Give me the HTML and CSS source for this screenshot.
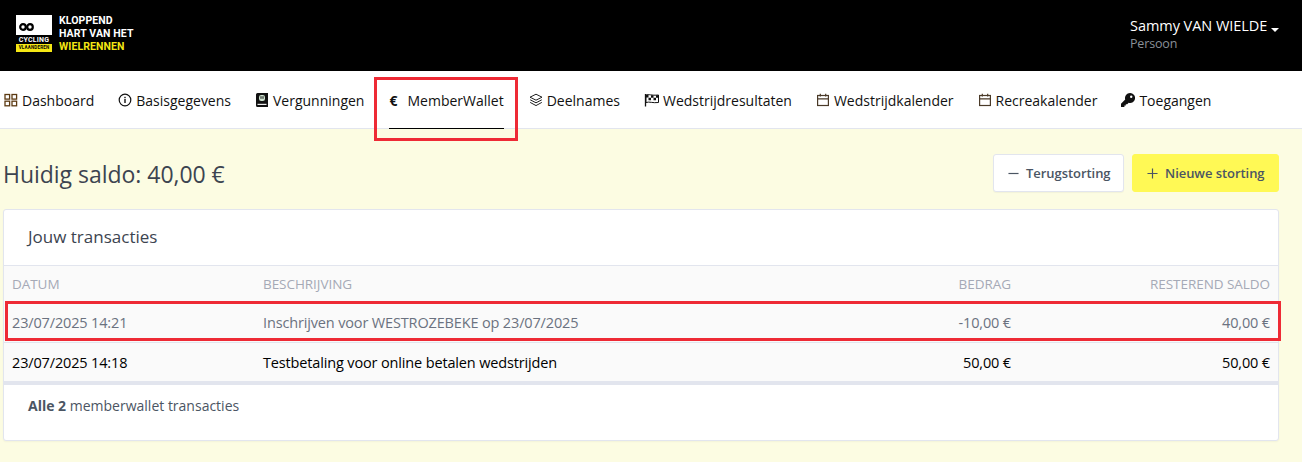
FILE: index.html
```html
<!DOCTYPE html>
<html lang="nl">
<head>
<meta charset="utf-8">
<title>MemberWallet</title>
<link rel="stylesheet" href="styles.css">
</head>
<body>
<header class="topbar">
  <div class="brand">
    <div class="logo">
      <div class="logo-top">
        <svg width="15" height="8" viewBox="0 0 15 8"><circle cx="4" cy="4" r="2.800" fill="none" stroke="#000" stroke-width="2.200"/><circle cx="11" cy="4" r="2.800" fill="none" stroke="#000" stroke-width="2.200"/></svg>
      </div>
      <div class="logo-mid">CYCLING</div>
      <div class="logo-bot">VLAANDEREN</div>
    </div>
    <div class="slogan"><span>KLOPPEND</span><span>HART VAN HET</span><span class="yellow">WIELRENNEN</span></div>
  </div>
  <div class="user">
    <div class="user-name">Sammy VAN WIELDE<span class="caret"></span></div>
    <div class="user-role">Persoon</div>
  </div>
</header>
<nav class="nav">
  <a class="nav-item"><svg class="ic" viewBox="0 0 14 14"><g fill="none" stroke="#5c3a12" stroke-width="1.300"><rect x="1" y="1.500" width="4.600" height="4.600"/><rect x="8" y="1.500" width="4.600" height="4.600"/><rect x="1" y="8.200" width="4.600" height="4.600"/><rect x="8" y="8.200" width="4.600" height="4.600"/></g></svg>Dashboard</a>
  <a class="nav-item"><svg class="ic" viewBox="0 0 14 14"><circle cx="7" cy="7" r="5.800" fill="none" stroke="#111" stroke-width="1.200"/><rect x="6.300" y="6" width="1.400" height="4" fill="#111"/><rect x="6.300" y="3.800" width="1.400" height="1.400" fill="#111"/></svg>Basisgegevens</a>
  <a class="nav-item"><svg class="ic" viewBox="0 0 14 14"><path d="M1 1.500A1.500 1.500 0 0 1 2.500 0H13v14H2.500A1.500 1.500 0 0 1 1 12.500z" fill="#111"/><rect x="4" y="2" width="6" height="6" rx="2.200" fill="#cfe3d0"/><rect x="5.500" y="3.200" width="1" height="2.600" fill="#111"/><rect x="7.500" y="3.200" width="1" height="2.600" fill="#111"/><rect x="2.500" y="10.800" width="9" height="1.200" fill="#eee"/></svg>Vergunningen</a>
  <a class="nav-item active"><span class="euro">€</span>MemberWallet</a>
  <a class="nav-item"><svg class="ic" viewBox="0 0 14 14"><g fill="none" stroke="#222" stroke-width="1" stroke-linejoin="round"><path d="M7 1.200 13 4.200 7 7.200 1 4.200z"/><path d="M1.200 6.800 7 9.800l5.800-3"/><path d="M1.200 9.400 7 12.600l5.800-3.200"/></g></svg>Deelnames</a>
  <a class="nav-item"><svg class="ic ic-flag" viewBox="0 0 15 14"><path d="M1.500 1v12.500" stroke="#111" stroke-width="1.300"/><path d="M2 2c3-1.200 5 .8 12.500 0v7.500c-6 .8-9-1.200-12.500 0z" fill="#fff" stroke="#111" stroke-width="1"/><path d="M2 2h2.500v2.500H2zM7 2.300h2.500v2.500H7zM12 2.300h2.500v2.500H12zM4.500 4.700H7v2.500H4.500zM9.500 4.800H12v2.500H9.500z" fill="#111"/></svg>Wedstrijdresultaten</a>
  <a class="nav-item"><svg class="ic" viewBox="0 0 14 14"><g fill="none" stroke="#4a3a28" stroke-width="1.200"><rect x="1.600" y="2.500" width="10.800" height="10"/><path d="M1.600 5.800h10.800M4.300.8v2.600M9.700.8v2.600"/></g></svg>Wedstrijdkalender</a>
  <a class="nav-item"><svg class="ic" viewBox="0 0 14 14"><g fill="none" stroke="#4a3a28" stroke-width="1.200"><rect x="1.600" y="2.500" width="10.800" height="10"/><path d="M1.600 5.800h10.800M4.300.8v2.600M9.700.8v2.600"/></g></svg>Recreakalender</a>
  <a class="nav-item"><svg class="ic" viewBox="0 0 14 14"><path d="M9 0a5 5 0 1 1-1.300 9.800L6.200 11.200H4.800V12.600H3.400V14H0V10.800L4.200 6.400A5 5 0 0 1 9 0z" fill="#111"/><circle cx="10.200" cy="3.800" r="1.200" fill="#fff"/></svg>Toegangen</a>
</nav>
<main class="content">
  <div class="title-row">
    <h1 class="saldo">Huidig saldo: 40,00 €</h1>
    <div class="actions">
      <button class="btn btn-white"><svg class="btn-ic" viewBox="0 0 12 12"><path d="M.5 6h11" stroke="#4b5563" stroke-width="1.300"/></svg>Terugstorting</button>
      <button class="btn btn-yellow"><svg class="btn-ic" viewBox="0 0 12 12"><path d="M.5 6h11M6 .5v11" stroke="#4b5563" stroke-width="1.300"/></svg>Nieuwe storting</button>
    </div>
  </div>
  <section class="card">
    <h2 class="card-title">Jouw transacties</h2>
    <div class="table">
      <div class="row head">
        <div>DATUM</div><div>BESCHRIJVING</div><div class="num">BEDRAG</div><div class="num">RESTEREND SALDO</div>
      </div>
      <div class="row muted marked">
        <div>23/07/2025 14:21</div><div>Inschrijven voor WESTROZEBEKE op 23/07/2025</div><div class="num">-10,00 €</div><div class="num">40,00 €</div>
      </div>
      <div class="row dark">
        <div>23/07/2025 14:18</div><div>Testbetaling voor online betalen wedstrijden</div><div class="num">50,00 €</div><div class="num">50,00 €</div>
      </div>
    </div>
    <div class="card-foot"><strong>Alle 2</strong> memberwallet transacties</div>
  </section>
</main>
</body>
</html>
```
FILE: styles.css
```css
* { box-sizing: border-box; }
html, body { margin: 0; height: 100%; }
body {
  background: #fcfce2;
  font-family: "Open Sans", "Noto Sans", sans-serif;
  color: #111;
  overflow: hidden;
}
.topbar {
  height: 71px;
  background: #000;
  display: flex;
  justify-content: space-between;
  padding: 15px 22px 0 16px;
}
.brand { display: flex; gap: 7px; align-items: flex-start; }
.logo { width: 36px; height: 37px; display: flex; flex-direction: column; }
.logo-top { height: 20px; background: #fff; display: flex; align-items: flex-end; padding: 0 0 4px 3px; }
.logo-mid {
  height: 9px; background: #000; color: #fff;
  font: 700 7px/10px "Roboto", sans-serif; text-align: center; letter-spacing: .2px;
}
.logo-bot {
  height: 8px; background: #f5e714; color: #000;
  font: 700 4.500px/8px "Roboto", sans-serif; text-align: center; letter-spacing: .2px;
}
.slogan {
  display: flex; flex-direction: column;
  color: #fff;
  font: 700 10.500px/13px "Roboto", sans-serif;
  letter-spacing: .1px;
  margin-top: -1px;
}
.yellow { color: #f5e714; }
.user { width: 150px; margin-top: 1px; }
.user-name { color: #fff; font-size: 14.500px; line-height: 20px; white-space: nowrap; letter-spacing: -.05px; }
.caret {
  display: inline-block; margin-left: 4px; vertical-align: -1px;
  border-left: 4px solid transparent; border-right: 4px solid transparent; border-top: 4px solid #fff;
}
.user-role { color: #8a9099; font-size: 12.500px; line-height: 16px; letter-spacing: -.15px; }
.nav {
  height: 58px;
  background: #fff;
  border-bottom: 1px solid #e2e5ee;
  display: flex;
  padding-left: 4px;
  gap: 24px;
}
.nav-item {
  display: flex; align-items: center;
  height: 57px;
  padding-top: 1px;
  font-size: 14px;
  color: #111;
  white-space: nowrap;
}
.ic { width: 14px; height: 14px; margin-right: 4px; flex: none; margin-top: -1px; }
.ic-flag { width: 15px; }
.euro { font-weight: 700; width: 18px; font-size: 14px; }
.active {
  position: relative;
  border-bottom: 1px solid #000;
  height: 58px;
  margin: 0 1px;
}
.active::after {
  content: "";
  position: absolute;
  left: -15px; right: -14px; top: 6px; bottom: -13px;
  border: 3px solid #ee2a35;
}
.content { padding: 25px 23px 0 3px; }
.title-row { display: flex; justify-content: space-between; align-items: center; height: 38px; }
.saldo { margin: 0; font-size: 23px; font-weight: 400; color: #3c4450; letter-spacing: -.03px; padding-top: 1px; }
.actions { display: flex; gap: 8px; }
.btn {
  height: 38px; display: flex; align-items: center; gap: 7px;
  font: 600 13px "Open Sans", sans-serif; color: #4b5563;
  border-radius: 3px; letter-spacing: -.05px;
  white-space: nowrap;
}
.btn-white { width: 131px; background: #fff; border: 1px solid #e2e5ee; padding: 0 14px; box-shadow: 0 1px 1px rgba(0,0,0,.04); }
.btn-yellow { width: 147px; background: #fff955; border: 1px solid #fff955; padding: 0 14px; }
.btn-ic { width: 11px; height: 11px; flex: none; }
.card {
  margin-top: 17px;
  height: 232px;
  background: #fff;
  border: 1px solid #e2e5ee;
  border-radius: 3px;
  box-shadow: 0 1px 2px rgba(0,0,0,.04);
}
.card-title {
  margin: 0; height: 56px; padding: 0 24px 2px;
  display: flex; align-items: center;
  font-size: 17px; font-weight: 400; color: #3c4450;
  border-bottom: 1px solid #e2e5ee;
}
.table { background: #fafafa; border-bottom: 4px solid #e2e5ee; }
.row {
  display: grid;
  grid-template-columns: 251px 1fr 260px 259px;
  padding: 0 8px;
  font-size: 14.500px;
  letter-spacing: -.15px;
  align-items: center;
}
.head { height: 35px; color: #a5a9b6; font-size: 13.500px; letter-spacing: -.05px; }
.muted { height: 42px; color: #6b7280; padding-top: 1px; }
.marked { position: relative; border-bottom: 1px solid #e2e5ee; }
.marked::after {
  content: "";
  position: absolute;
  left: 1px; right: -3px; top: 0; bottom: 1px;
  border: 3px solid #ee2a35;
  pointer-events: none;
}
.dark { height: 38px; color: #000; }
.num { text-align: right; }
.card-foot { padding: 11px 24px; font-size: 14px; color: #4b5563; line-height: 20px; }
.card-foot strong { font-weight: 700; }
```
